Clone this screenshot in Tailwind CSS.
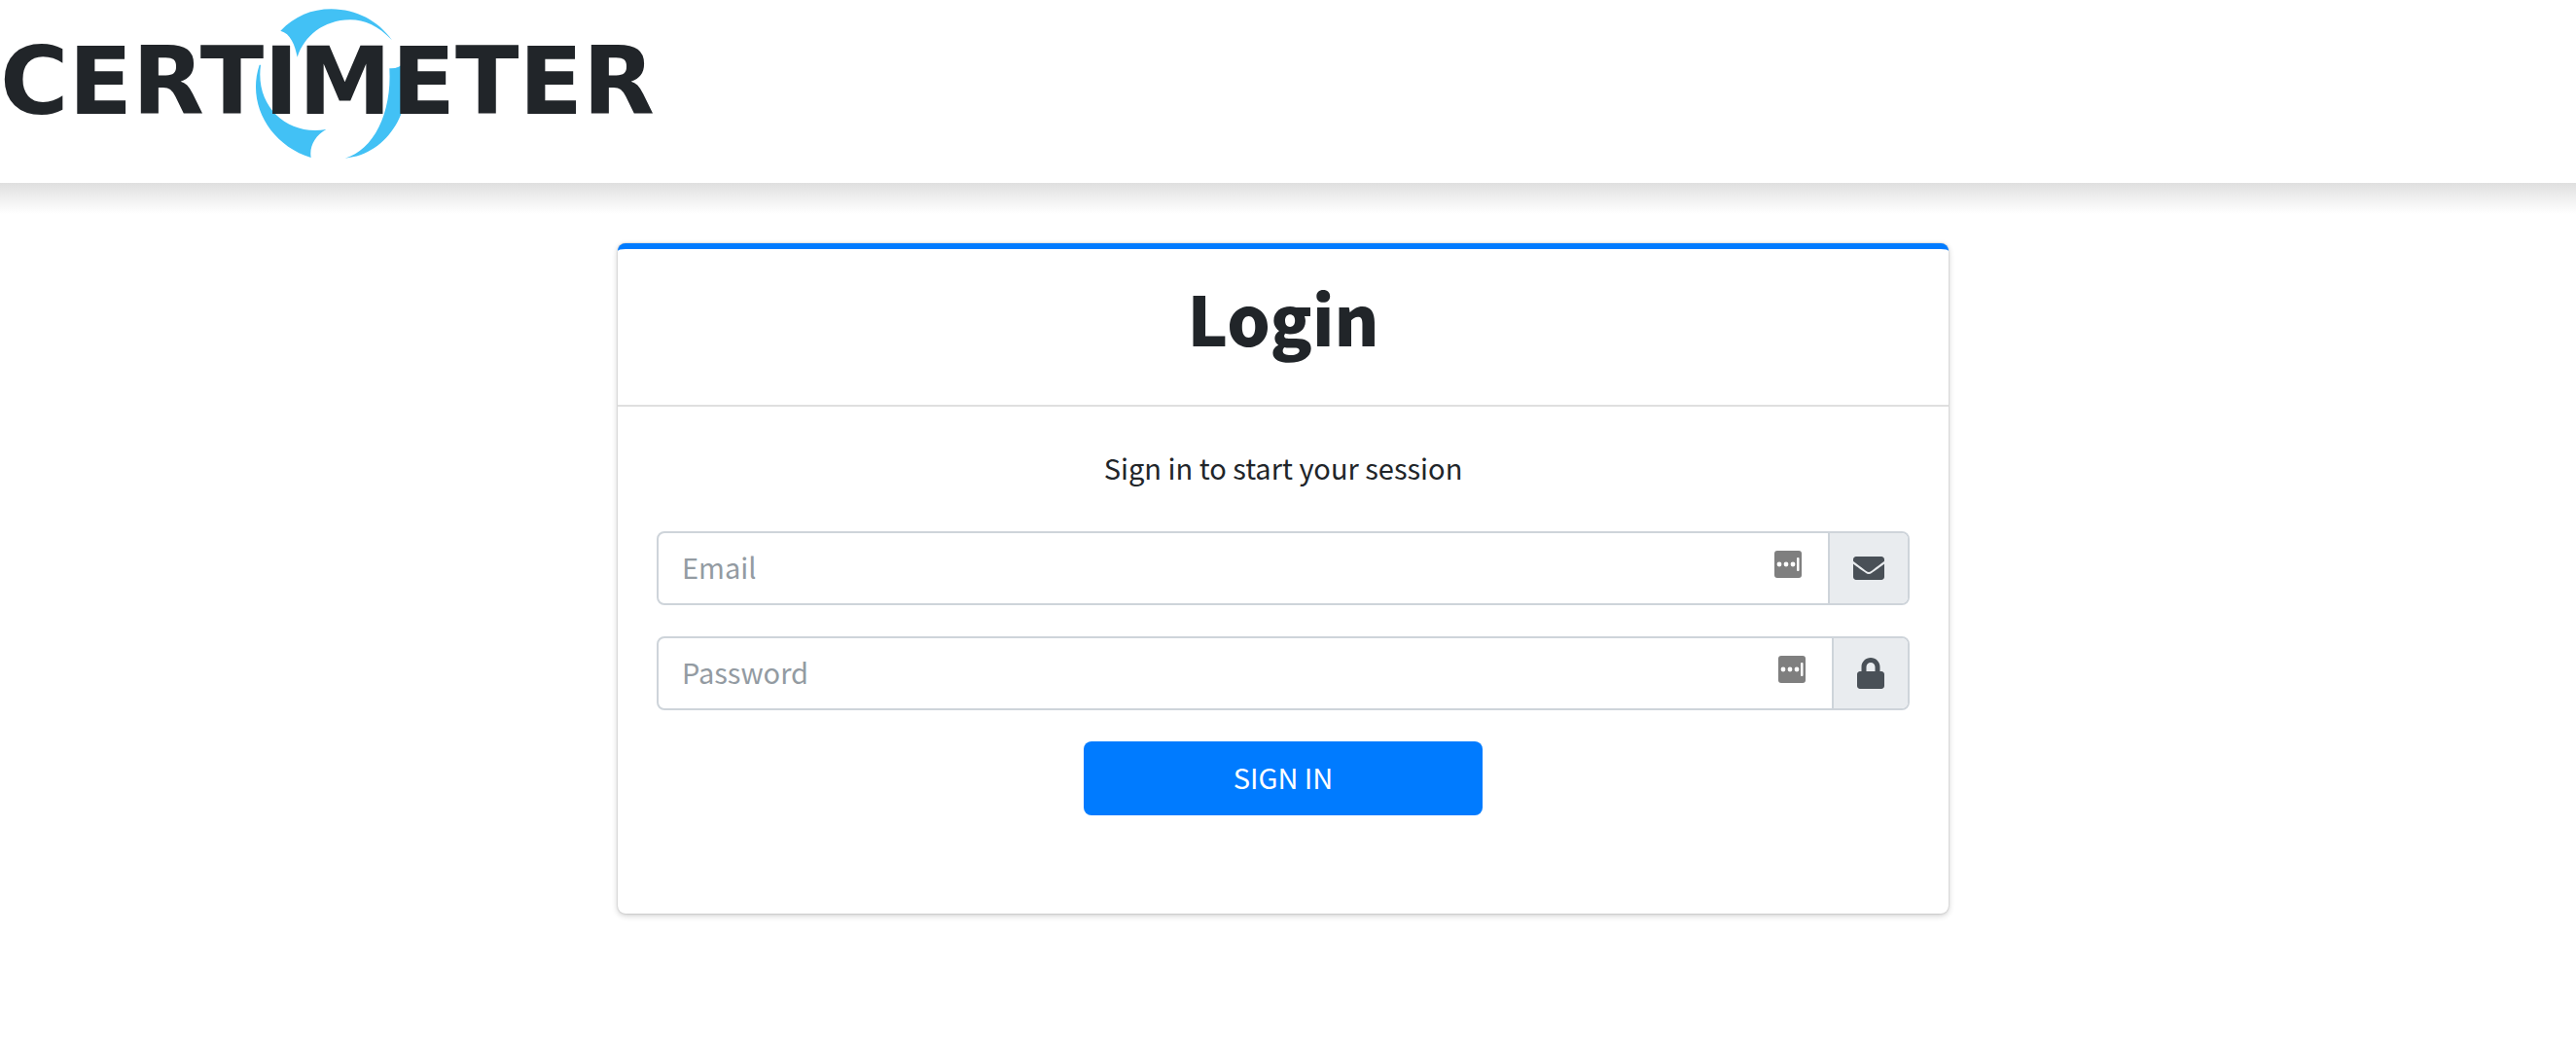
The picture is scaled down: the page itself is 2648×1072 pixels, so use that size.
<!DOCTYPE html>
<html lang="en">
<head>
<meta charset="utf-8">
<meta name="viewport" content="width=device-width, initial-scale=1">
<title>Certimeter - Login</title>
<script src="https://cdn.jsdelivr.net/npm/@tailwindcss/browser@4"></script>
</head>
<body class="min-h-screen bg-white font-['Noto_Sans_CJK_SC',sans-serif] text-[29px] leading-[48px] text-[#212529]">
<header class="flex h-[188px] items-start bg-white">
  <a href="#" class="relative block h-[170px]" aria-label="Certimeter">
    <svg class="absolute left-60 top-0 h-[170px] w-[200px]" viewBox="0 0 600 510" fill="#42c1f5" aria-hidden="true">
      <path d="M145 95C190 50 240 28 302 28C380 29 446 64 489 124C447 80 405 61 360 61C276 62 218 112 197 176C190 139 176 103 145 95Z"/>
      <path d="M80 200C40 320 112 446 239 486C233 451 252 418 286 399C168 420 66 330 84 200Z"/>
      <path d="M486 211C503 211 517 205 527 193C563 328 480 477 344 488C431 464 489 350 481 211Z"/>
    </svg>
    <span class="relative block pt-8 font-['DejaVu_Sans',sans-serif] text-[96px] font-bold leading-[104px]">CERTIMETER</span>
  </a>
</header>
<div class="h-8 bg-linear-to-b from-[#dfdfdf] via-[#f0f0f0] to-white"></div>
<main class="pr-2.5 pt-[30px]">
  <section class="mx-auto max-w-[1368px] rounded-lg border-t-[6px] border-[#007bff] bg-white shadow-[0_0_2px_rgba(0,0,0,0.25),0_2px_6px_rgba(0,0,0,0.2)]">
    <div class="border-b-2 border-[#dfdfdf] pb-[42px] pt-[22px]">
      <h1 class="text-center text-[70px] font-black leading-[96px]">Login</h1>
    </div>
    <form class="px-10 pb-[101px] pt-[38px]">
      <p class="mb-[42px] text-center">Sign in to start your session</p>
      <div class="mb-8 flex h-[76px] overflow-hidden rounded-lg border-2 border-[#ced4da]">
        <input type="email" aria-label="Email" placeholder="Email" class="min-w-0 flex-1 px-6 pb-1 outline-none placeholder:text-[#939ba2]">
        <svg class="mr-[27px] mt-[18px] size-7" viewBox="0 0 28 28" aria-hidden="true">
          <rect width="28" height="28" rx="3" fill="#7f7f7f"/>
          <g fill="#fff"><circle cx="5" cy="14" r="2.4"/><circle cx="12" cy="14" r="2.4"/><circle cx="19" cy="14" r="2.4"/><rect x="23" y="7" width="2.5" height="14" rx="1"/></g>
        </svg>
        <span class="flex items-center border-l-2 border-[#ced4da] bg-[#e9ecef] px-6">
          <svg class="size-8" viewBox="0 0 512 512" fill="#495057" aria-hidden="true"><path d="M502.300 190.800c3.900-3.100 9.700-.2 9.700 4.700V400c0 26.500-21.500 48-48 48H48c-26.500 0-48-21.500-48-48V195.600c0-5 5.700-7.800 9.700-4.700 22.400 17.400 52.100 39.500 154.100 113.600 21.100 15.400 56.700 47.800 92.200 47.600 35.700.3 72-32.800 92.300-47.600 102-74.100 131.600-96.300 154-113.700zM256 320c23.200.4 56.600-29.200 73.400-41.400 132.700-96.300 142.800-104.700 173.400-128.700 5.800-4.500 9.200-11.500 9.200-18.900v-19c0-26.500-21.500-48-48-48H48c-26.500 0-48 21.500-48 48v19c0 7.400 3.400 14.300 9.200 18.900 30.600 23.900 40.700 32.400 173.400 128.700 16.800 12.200 50.200 41.800 73.400 41.400z"/></svg>
        </span>
      </div>
      <div class="mb-8 flex h-[76px] overflow-hidden rounded-lg border-2 border-[#ced4da]">
        <input type="password" aria-label="Password" placeholder="Password" class="min-w-0 flex-1 px-6 pb-1 outline-none placeholder:text-[#939ba2]">
        <svg class="mr-[27px] mt-[18px] size-7" viewBox="0 0 28 28" aria-hidden="true">
          <rect width="28" height="28" rx="3" fill="#7f7f7f"/>
          <g fill="#fff"><circle cx="5" cy="14" r="2.4"/><circle cx="12" cy="14" r="2.4"/><circle cx="19" cy="14" r="2.4"/><rect x="23" y="7" width="2.5" height="14" rx="1"/></g>
        </svg>
        <span class="flex items-center border-l-2 border-[#ced4da] bg-[#e9ecef] px-6">
          <svg class="h-8 w-7" viewBox="0 0 448 512" fill="#495057" aria-hidden="true"><path d="M400 224h-24v-72C376 68.200 307.800 0 224 0S72 68.200 72 152v72H48c-26.500 0-48 21.500-48 48v192c0 26.500 21.500 48 48 48h352c26.500 0 48-21.500 48-48V272c0-26.500-21.500-48-48-48zm-104 0H152v-72c0-39.700 32.300-72 72-72s72 32.300 72 72v72z"/></svg>
        </span>
      </div>
      <button type="submit" class="mx-auto block h-[76px] w-full max-w-[410px] rounded-lg bg-[#007bff] pb-1 text-white">SIGN IN</button>
    </form>
  </section>
</main>
</body>
</html>
